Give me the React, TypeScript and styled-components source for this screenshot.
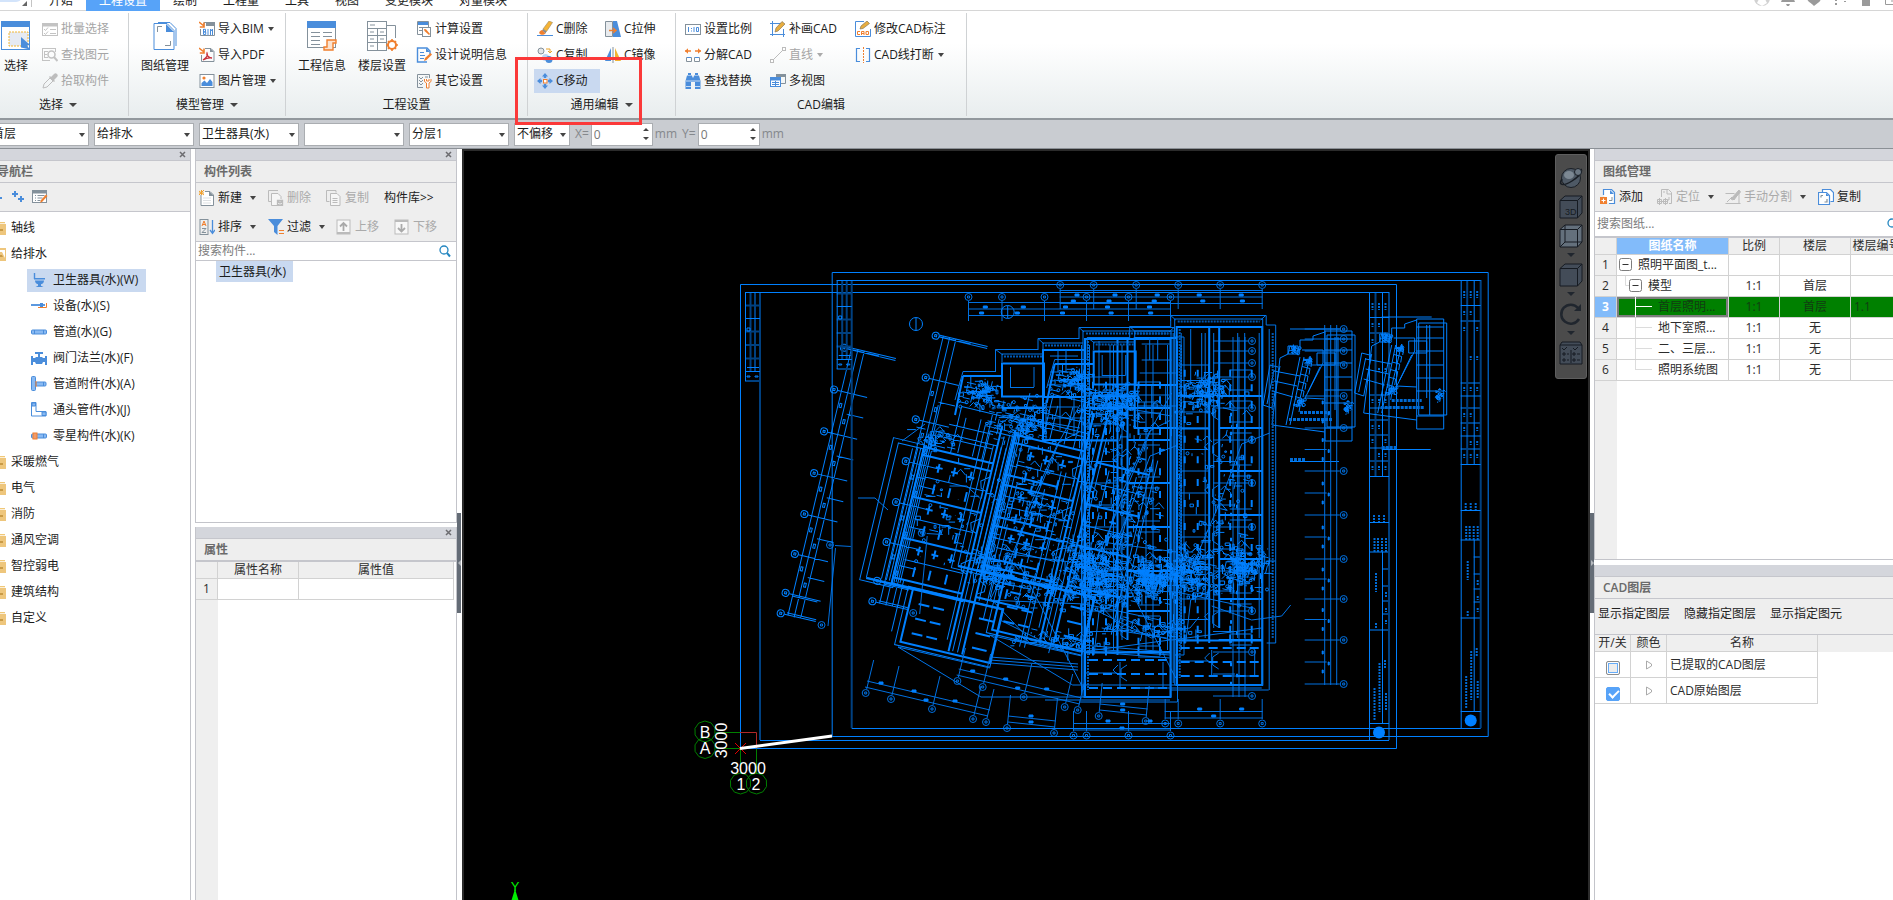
import React from 'react';
import styled, { createGlobalStyle, css } from 'styled-components';

const BLUE = '#4a8ddb';
const GREY = '#84919b';
const ORANGE = '#f07f2e';
const CAD = '#0080ff';
const DIM = '#0059b3';
const FAINT = '#004080';

const GlobalStyle = createGlobalStyle`
  * { box-sizing: border-box; }
  body { margin: 0; background: #fff; overflow: hidden; }
  body, button, input, select, table {
    font-family: "Open Sans", "Noto Sans CJK SC", sans-serif;
    font-size: 12px;
    line-height: 16px;
    color: #1c1c1c;
  }
  button { border: 0; padding: 0; margin: 0; background: none; white-space: nowrap; }
  ul { list-style: none; margin: 0; padding: 0; }
  svg { display: block; flex: none; }
`;

/* ------------------------------------------------------------------ icons */

type IconName = keyof typeof icons;

const icons = {
  batch: <g fill="none" stroke="#c3c3c3"><rect x=".5" y="2.5" width="15" height="12" /><path d="M0 4h16" strokeWidth="3" /><path d="M2 8l1.500 1.500L6 6.500M2 12l1.500 1.500L6 10.500M8 8.500h6M8 12.500h6" /></g>,
  find: <g fill="none" stroke="#c3c3c3"><path d="M0 1.500h14M0 13.500h8M.5 1v12M13.500 1v4M2 4.500h4M2.500 4v7M2 7.500h3M2 10.500h4" /><circle cx="9.500" cy="7.500" r="3.500" strokeWidth="1.600" /><path d="M12 10l3.500 4" strokeWidth="2" /></g>,
  pick: <g fill="#bdbdbd"><path d="M1 15l1-4 6-6 3 3-6 6z" fill="none" stroke="#bdbdbd" /><path d="M7 4l1-1 1 1 3-3a2 2 0 0 1 3 3l-3 3 1 1-1 1z" /></g>,
  bim: <g><path d="M5 4.500V1.500h10.500v13H1.500V8" fill="none" stroke={GREY} /><path d="M7 1h9v4H7z" fill={GREY} /><path d="M0 1l5 4M5 1.500V6H.8" fill="none" stroke={ORANGE} strokeWidth="1.600" /><path d="M4.500 8v5.500h2.200v-2.600H4.500h2V8.300h-2M9 8v6M11.500 14V8l1 2 1-2v6" fill="none" stroke={BLUE} /></g>,
  pdf: <g><path d="M6 1.500h6l3 3v10H2.500V8" fill="none" stroke={GREY} /><path d="M11 1v4h4z" fill={GREY} /><path d="M0 1l5 4M5 1.500V6H.8" fill="none" stroke={ORANGE} strokeWidth="1.600" /><path d="M4 13c3-2 5-5 4-7-1 2 2 5 5 5-3-.5-6 .3-9 2z" fill="none" stroke="#c8323c" strokeWidth="1.300" /></g>,
  image: <g><rect x="1" y="1.500" width="14" height="13" fill="#fff" stroke={GREY} /><circle cx="5" cy="5" r="1.600" fill={ORANGE} /><path d="M2.500 13V10l3-2.500L8 10l3-4 2.500 3v4z" fill={BLUE} /></g>,
  calc: <g><path d="M6 13.500H1.500v-13h11V6" fill="none" stroke={GREY} /><path d="M2 1h10v3H2z" fill={BLUE} /><path d="M3 6.500h3M3 9.500h3" stroke={GREY} /><rect x="6.500" y="6.500" width="8" height="9" fill="#fff" stroke={GREY} /><path d="M8 8l2 .3L14 13l-1 1-4.500-4z" fill={ORANGE} /></g>,
  design: <g><path d="M14 7V4L11 1H1.500v14H11" fill="none" stroke={BLUE} strokeWidth="1.400" /><path d="M10 1v4h4z" fill={BLUE} /><path d="M4 5.500h4M4 8.500h5M4 11.500h4" stroke={BLUE} /><path d="M8 14l1-3 5.500-5 1.500 1.500-5.500 5.500z" fill={ORANGE} /></g>,
  other: <g><path d="M7 14.500H1.500v-13h12V5" fill="none" stroke={GREY} /><path d="M3 4l2 2 2-2M3 7l2 2 2-2M3 10l2 2 2-2M9 4h3" fill="none" stroke={GREY} /><path d="M8.500 6v2.500l2 1.500v5h2.500v-5l2-1.500V6M10.500 6v2h2.500V6" fill="#fff" stroke={ORANGE} /></g>,
  erase: <g><path d="M0 14.500h16" stroke={BLUE} /><path d="M12 0l3.500 1.500-6 9L6 8z" fill="#f5b335" stroke="#9a8a66" strokeWidth=".6" /><path d="M6 8l3.500 2.500-1 2L5 9.500z" fill="#888" /><path d="M5 9l3.500 3.500c-2 2-5 1.500-6 0s1-3 2.500-3.500z" fill={ORANGE} /></g>,
  copyC: <g><circle cx="4" cy="4" r="3" fill="#e2e5e8" stroke={GREY} /><circle cx="8.500" cy="10.500" r="3.500" fill="#bcd5f3" /><path d="M9 2h4v3M11 4l2 2 2-2" fill="none" stroke="#e8a32b" /><circle cx="12" cy="12.500" r="3.500" fill={BLUE} /></g>,
  move: <g><rect x="6.500" y="6.500" width="3.500" height="3.500" fill="#fff" stroke={ORANGE} /><path d="M8 0l3 3.500H9.200V5H6.800V3.500H5zM8 16l3-3.500H9.200V11H6.800v1.500H5zM0 8l3.500-3v1.800H5v2.400H3.500V11zM16 8l-3.500-3v1.800H11v2.400h1.500V11z" fill={BLUE} /></g>,
  stretch: <g><path d="M.5.500h7v15h-7z" fill="#e8ebee" stroke={GREY} /><path d="M8 0h4l4 16H8z" fill={BLUE} /><path d="M4 9.500h6M8 7l3 2.500L8 12" fill="none" stroke={ORANGE} strokeWidth="1.400" /></g>,
  mirror: <g><path d="M6 1v13H0z" fill={BLUE} /><path d="M10 1v13h6z" fill="#f3b431" /><path d="M8 0v16" stroke={GREY} /></g>,
  scale: <g fill="none" stroke={GREY}><rect x=".5" y="3.500" width="15" height="10" /><path d="M3.500 6v5M6.500 7v1M6.500 9.500v1M9 6v5M11.500 6.500h2v4h-2z" stroke={BLUE} /></g>,
  explode: <g><path d="M0 4h6M10 4h6" stroke={ORANGE} strokeWidth="1.400" /><path d="M0 4l3-2.800v5.600zM16 4l-3-2.800v5.600z" fill={ORANGE} /><path d="M1.500 10.500h5v4h-5zM9.500 10.500h5v4h-5z" fill="#fff" stroke={GREY} /><path d="M2 10.500h4M10 10.500h4" stroke={BLUE} /></g>,
  binocular: <g fill={BLUE}><path d="M3 0h3v2H3zM10 0h3v2h-3zM2 2.500h5l.5 2h1l.5-2h5L15.500 8v8H10V9H6v7H.5V8z" /><path d="M1 8h14M1 13.500h5M10 13.500h5" stroke="#fff" strokeWidth=".7" /></g>,
  draw: <g><path d="M0 2.500h11M2.500 0v15M0 13.500h15M13.500 8v8" fill="none" stroke={BLUE} /><path d="M5 11l1-4 6-6.500L15 3 8 10z" fill="#e7ad3f" stroke="#8a7a5a" strokeWidth=".7" /></g>,
  line: <g fill="none" stroke="#bcbcbc"><path d="M2.500 13.500l11-11" /><rect x=".5" y="12.500" width="3" height="3" fill="#fff" /><rect x="12.500" y=".5" width="3" height="3" fill="#fff" /></g>,
  views: <g><path d="M6 1.500h9.500v9H11" fill="none" stroke={GREY} /><path d="M6 1h10v3H6z" fill={GREY} /><rect x=".5" y="4.500" width="10" height="9" fill="#fff" stroke={BLUE} /><path d="M0 6h11" stroke={BLUE} strokeWidth="3" /><path d="M2 9.500h7M2 11.500h7M5.500 8v6" stroke={BLUE} /></g>,
  annotate: <g><path d="M9 .5H.5v15h15V8" fill="none" stroke={BLUE} /><path d="M5 8l1-3 6-5 2.500 2.500L8 7.500z" fill="#e7ad3f" stroke="#8a7a5a" strokeWidth=".7" /><path d="M5 10.500H2.500v3H5M6.500 14v-3.500h2.500V14M6.500 12.500h2.500M11 10.500h2.500v3H11z" fill="none" stroke={ORANGE} /></g>,
  breakLine: <g fill="none"><path d="M5 1.500H1.500v13H5M11 1.500h3.500v13H11" stroke={BLUE} strokeWidth="1.200" /><path d="M8.500 0v16" stroke={ORANGE} strokeDasharray="2 1" /></g>,
  plusPair: <g stroke={BLUE} strokeWidth="2"><path d="M1 5h6M4 2v6M7 10h6M10 7v6" /></g>,
  dots: <path d="M2 9h2M9 9h3" stroke={BLUE} strokeWidth="2" />,
  listEdit: <g><rect x=".5" y="1.500" width="14" height="12" fill="#fff" stroke={GREY} /><path d="M0 3h15" stroke={GREY} strokeWidth="3" /><path d="M3 6.500h1M5.500 6.500h7M3 9h1M5.500 9h5M3 11.500h1M5.500 11.500h3" stroke={GREY} /><path d="M8 14l1-3 5-5.500 1.500 1.500-5 5.500z" fill={ORANGE} /></g>,
  folder: <g><path d="M1 2h14v1.300H1z" fill="#f0c878" /><path d="M0 4h16v11H0z" fill="#eec67c" /><path d="M6 9h7v2H6z" fill="#c99a45" /></g>,
  folderOpen: <g><path d="M0 2h16v13H0z" fill="#eec67c" /><path d="M6 4h9v8l-3-6H6z" fill="#fff" /><path d="M0 6.500h12l2.500 8.500H0z" fill="#eec67c" /><path d="M8 9h4l1 2H9z" fill="#c99a45" /></g>,
  toilet: <g fill={BLUE}><path d="M3.500 1v6" stroke={BLUE} strokeWidth="1.400" /><path d="M3 6h11v1.500H3zM4 8.500h9c0 2-1 3.200-3 3.700v1.600l2.500 1.200h-8L7 13.800v-1.600C5 11.700 4 10.500 4 8.500z" /></g>,
  device: <g><path d="M0 7h14" stroke={BLUE} strokeWidth="1.800" /><path d="M9 5h3v4H9z" fill={BLUE} /><path d="M7 9.500h8.500V5" fill="none" stroke={ORANGE} /></g>,
  pipe: <g fill="#88b9f2" stroke={BLUE}><rect x=".5" y="6" width="15" height="4" rx="1" /><path d="M3.500 6v4M12.500 6v4" /></g>,
  valve: <g fill={BLUE}><path d="M4 2h8v2H9v3h2l1 1h2V6h2v9h-2v-3h-2l-1 2H5l-1-2H2v3H0V6h2v2h2l1-1h2V4H4z" /></g>,
  fitting: <g fill="#88b9f2" stroke={BLUE}><rect x=".5" y=".5" width="4" height="14" rx="1" /><rect x="5" y="6" width="10" height="4" rx="1" /><path d="M5 5v6" stroke={ORANGE} /><path d="M12.500 6v4" /></g>,
  elbow: <g fill="#fff" stroke={BLUE}><path d="M.5.500h4.500v9H15v4.500H.5z" /><path d="M1 1h3.500v3H1zM11 10h4v3.500h-4z" fill="#88b9f2" /></g>,
  misc: <g fill="#88b9f2" stroke={BLUE}><rect x=".5" y="6" width="15" height="4" rx="1" /><rect x="2" y="5" width="4" height="6" fill="#f09a6a" stroke={ORANGE} /><path d="M12.500 6v4" /></g>,
  newDoc: <g><path d="M2 5v10.500h12.500V5L11 1.500H6" fill="#fff" stroke={GREY} /><path d="M10 1v5h5z" fill={GREY} /><path d="M4 8h8M4 10.500h8M4 13h8" stroke="#dde0e3" /><path d="M0 1l5 4M5 0L0 5M0 3h5M2.500 0v5" stroke="#f0a02e" /></g>,
  delDoc: <g fill="none" stroke="#bbb"><path d="M3 11.500H.5V.5H10" /><path d="M9 15.500H3.500v-12H10l3 3V9" fill="#f6f6f6" /><path d="M9.500 10.500h5v5h-5zM9.500 10.500l5 5M14.500 10.500l-5 5" strokeWidth="1.300" /></g>,
  copyDoc: <g fill="none" stroke="#bbb"><path d="M3.500 11.500H.5V.5H10v2" /><path d="M4.500 3.500H11l3 3v9H4.500z" fill="#f6f6f6" /><path d="M6.500 8.500h5M6.500 10.500h5M6.500 12.500h5" /></g>,
  sort: <g fill="none"><rect x="1" y=".5" width="8" height="15" stroke={GREY} /><path d="M3 7l2-5 2 5M3.500 5.500h3" stroke={ORANGE} /><path d="M3 9.500h4l-4 4h4" stroke={GREY} /><path d="M13.500 1v13M11 11l2.500 3.500L16 11" stroke={BLUE} strokeWidth="1.300" /></g>,
  filter: <g><path d="M0 0h15L9.500 7v9L6 13V7z" fill={BLUE} /><path d="M11 11.500h5M11 14.500h5" stroke={ORANGE} /></g>,
  up: <g><rect x="1" y="1" width="13" height="14" fill="#f8f8f8" stroke="#bbb" /><path d="M1 14h13" stroke="#bbb" strokeWidth="2" /><path d="M7.500 12V5M4 7.500L7.500 4 11 7.500" fill="none" stroke="#aaa" strokeWidth="1.800" /></g>,
  down: <g><rect x="1" y="1" width="13" height="14" fill="#f8f8f8" stroke="#bbb" /><path d="M1 2h13" stroke="#bbb" strokeWidth="2" /><path d="M7.500 5v7M4 9l3.500 3.500L11 9" fill="none" stroke="#aaa" strokeWidth="1.800" /></g>,
  search: <g fill="none" stroke="#2386c0" strokeWidth="1.300"><circle cx="7" cy="7" r="4" /><path d="M10 10l3 3.500" strokeWidth="2" /></g>,
  add: <g><path d="M3.500 6V.5h8l3 3v11H9" fill="#fff" stroke={BLUE} strokeWidth="1.200" /><path d="M10 1v4h4z" fill={BLUE} /><path d="M9 11.500h3V8" fill="none" stroke={GREY} /><path d="M0 8h7v7H0z" fill={ORANGE} /><path d="M1.500 11.500h4M3.500 9.500v4" stroke="#fff" /></g>,
  locate: <g fill="none" stroke="#bbb"><path d="M4.500 8V.5h7l3 3v11H12" /><path d="M10 1v4h4M6 3h2M12 8v3h-2" /><path d="M.5 10.500h4v4h-4zM6.500 10.500h4v4h-4zM2.500 9v7M8.500 9v7M0 12.500h11" /></g>,
  split: <g fill="none" stroke="#bbb"><path d="M.5 4.500h9M.5 14.500h15M2 13l5-5 2 3 5-7v10" /><path d="M6 10L14 1l1.500 2L8 11z" fill="#bbb" /></g>,
  copySheet: <g fill="#fff" stroke={BLUE} strokeWidth="1.200"><path d="M4.500 3V.5h8l3 3v9h-3" /><path d="M.5 3.500h8l3 3v9H.5z" /><path d="M8 4v3h3z" fill={BLUE} stroke="none" /><path d="M3 6.500v2M3 6.500h2M9 10v3H6.500" fill="none" stroke={GREY} /></g>,
};

const Icon = ({ name, size = 16 }: { name: IconName; size?: number }) => (
  <svg width={size} height={size} viewBox="0 0 16 16" aria-hidden="true">{icons[name]}</svg>
);

const SelectBig = () => (
  <svg width="30" height="30" viewBox="0 0 30 30" aria-hidden="true">
    <rect x=".5" y=".5" width="28" height="28" fill="#fff" stroke={BLUE} />
    <path d="M0 0h29v6H0z" fill={BLUE} />
    <path d="M8 11h19v14H8z" fill="#e6eaf2" stroke="#f2b632" strokeDasharray="2 1" />
    <path d="M20 16l9 8-3 .5 3 4-9-2z" fill={BLUE} />
  </svg>
);

const SheetBig = () => (
  <svg width="30" height="30" viewBox="0 0 30 30" fill="none" aria-hidden="true">
    <path d="M8 1.500h12l6 6V25" stroke={BLUE} />
    <path d="M4 2.500h13l7 7v19H4z" fill="#fff" stroke={BLUE} />
    <path d="M16 3l8 8h-8z" fill={BLUE} />
    <path d="M7.500 11V5.500H12M20.500 20v4.500H15" stroke={GREY} />
  </svg>
);

const InfoBig = () => (
  <svg width="30" height="30" viewBox="0 0 30 30" fill="none" aria-hidden="true">
    <rect x=".5" y=".5" width="28" height="26" fill="#fff" stroke={GREY} />
    <path d="M0 0h29v7H0z" fill={BLUE} />
    <path d="M4 11.500h9M4 15.500h9M4 19.500h9M4 23.500h9M16 11.500h9M16 15.500h9" stroke={GREY} />
    <path d="M20 19h9v3h-3v7h-9v-3h3z" fill="#fbe3d0" stroke={ORANGE} strokeWidth="1.400" />
  </svg>
);

const FloorBig = () => (
  <svg width="32" height="30" viewBox="0 0 32 30" fill="none" stroke={GREY} aria-hidden="true">
    <rect x="1.500" y=".5" width="19" height="29" fill="#fff" />
    <path d="M20.500 4.500h9V17M1.500 7.500h19M1.500 14.500h19M1.500 21.500h19M11.500 7v22M4 4h5M4 11h4M14 11h4M4 18h4M14 18h4M4 25h4" />
    <circle cx="26" cy="24" r="4" stroke={ORANGE} strokeWidth="2" fill="#fff" />
    <path d="M26 18v2M26 28v2M20 24h2M30 24h2M22 20l1 1M29 27l1 1M22 28l1-1M29 21l1-1" stroke={ORANGE} strokeWidth="1.600" />
  </svg>
);

const Caret = ({ color = '#444', wide = false }: { color?: string; wide?: boolean }) => (
  <svg width={wide ? 8 : 6} height="4" viewBox="0 0 8 4" preserveAspectRatio="none" aria-hidden="true">
    <path d="M0 0h8L4 4z" fill={color} />
  </svg>
);

const Cross = () => (
  <svg width="7" height="7" viewBox="0 0 7 7" stroke="#6c6c70" strokeWidth="1.500" aria-hidden="true">
    <path d="M1 1l5 5M6 1L1 6" />
  </svg>
);

/* ------------------------------------------------------------ page chrome */

const Shell = styled.div`
  display: flex;
  flex-direction: column;
  height: calc(100vh + 13px);
  margin: -12px -12px 0;
`;

const TabBar = styled.header`
  display: flex;
  flex: none;
  height: 23px;
  border-bottom: 1px solid #d6d6d6;
  background: #fff;
`;

const AppMenu = styled.button`
  display: flex;
  align-items: flex-end;
  justify-content: flex-end;
  width: 44px;
  height: 19px;
  margin-right: 4px;
  padding: 0 4px 1px 0;
  border-right: 1px solid #c4c4c4;
`;

const AppBadge = styled.span`
  flex: 1;
  align-self: flex-start;
  height: 14px;
  border-radius: 0 0 6px 0;
  background: #d3e4fb;
`;

const Tab = styled.button<{ $active?: boolean }>`
  height: 23px;
  padding: 3px 13px 0;
  ${p => p.$active && css`
    background: #57a3f8;
    color: #fff;
  `}
`;

const TabTools = styled.div`
  display: flex;
  align-items: flex-end;
  gap: 10px;
  margin-left: auto;
  padding: 0 5px 4px 0;
`;

const RibbonBar = styled.section`
  display: flex;
  flex: none;
  height: 109px;
  border-bottom: 2px solid #92989d;
  background: linear-gradient(#fff 30%, #e8edee);
`;

const RibbonGroup = styled.div<{ $width: number; $pad?: number }>`
  display: flex;
  flex-direction: column;
  flex: none;
  width: ${p => p.$width}px;
  margin: 2px 0;
  padding: 3px 0 0 ${p => p.$pad ?? 12}px;
  border-right: 1px solid #cfd2d4;
`;

const GroupBody = styled.div`
  display: flex;
  gap: 7px;
  height: 78px;
`;

const GroupTitle = styled.button<{ $pad?: number }>`
  display: flex;
  align-items: center;
  justify-content: center;
  gap: 6px;
  height: 24px;
  margin-left: -${p => p.$pad ?? 12}px;
`;

const BigPair = styled.div`
  display: flex;
  gap: 12px;
`;

const BigButton = styled.button`
  display: flex;
  flex-direction: column;
  align-items: center;
  gap: 7px;
  min-width: 32px;
  padding-top: 5px;
`;

const ToolGrid = styled.div<{ $cols?: string }>`
  display: grid;
  grid-template-columns: ${p => p.$cols ?? 'auto'};
  grid-template-rows: repeat(3, 26px);
  grid-auto-flow: column;
  align-items: center;
  justify-items: start;
`;

const SmallButton = styled.button<{ $selected?: boolean; $muted?: boolean }>`
  display: flex;
  align-items: center;
  gap: 3px;
  height: 24px;
  padding: 0 3px;
  color: ${p => (p.$muted ? '#a5a5a5' : 'inherit')};
  ${p => p.$selected && css`
    padding-right: 12px;
    background: #c9d9f0;
  `}
  & > svg:nth-of-type(2) { margin-left: 1px; }
`;

const Highlight = styled.div`
  position: absolute;
  left: -19px;
  top: -12px;
  width: 127px;
  height: 68px;
  border: 3px solid #fb3939;
  pointer-events: none;
`;

const MarkedArea = styled.div`
  position: relative;
  grid-row: 3;
  z-index: 1;
`;

const OptionBar = styled.section`
  display: flex;
  align-items: center;
  flex: none;
  gap: 5px;
  height: 29px;
  padding-left: 1px;
  border-bottom: 1px solid #8b9096;
  background: #c9ccd1;
`;

const SelectBox = styled.span<{ $width: number }>`
  position: relative;
  display: block;
  width: ${p => p.$width}px;
  & > svg { position: absolute; right: 4px; top: 10px; pointer-events: none; }
`;

const Select = styled.select`
  appearance: none;
  display: block;
  width: 100%;
  height: 23px;
  padding: 0 2px;
  border: 1px solid #aaadb1;
  border-radius: 0;
  background: #fff;
`;

const OffsetLabel = styled.label`
  display: flex;
  align-items: center;
  gap: 2px;
  color: #85888c;
`;

const Spin = styled.span`
  display: flex;
  align-items: center;
  width: 62px;
  height: 23px;
  padding-right: 3px;
  border: 1px solid #aaadb1;
  background: #fff;
`;

const SpinInput = styled.input`
  flex: 1;
  min-width: 0;
  height: 20px;
  padding: 0 2px;
  border: 0;
  background: none;
  color: #777;
`;

const Workspace = styled.main`
  display: flex;
  flex: 1;
  min-height: 0;
`;

const Column = styled.div<{ $width: number; $gap?: number; $after?: number }>`
  display: flex;
  flex-direction: column;
  flex: none;
  gap: ${p => p.$gap ?? 0}px;
  width: ${p => p.$width}px;
  min-height: 0;
  margin-right: ${p => p.$after ?? 0}px;
`;

const Panel = styled.section<{ $height?: string }>`
  display: flex;
  flex-direction: column;
  flex: ${p => (p.$height ? `0 0 ${p.$height}` : '1')};
  min-height: 0;
  overflow: hidden;
  border: 1px solid #c3c4ca;
  border-top: 0;
  background: #fff;
`;

const PanelStrip = styled.div`
  display: flex;
  align-items: center;
  justify-content: flex-end;
  flex: none;
  height: 12px;
  padding-right: 4px;
  border-bottom: 1px solid #c5c6cc;
  background: #d4d6dc;
`;

const PanelTitle = styled.h2`
  flex: none;
  height: 22px;
  margin: 0;
  padding: 2px 8px 0;
  border-bottom: 1px solid #c5c6cc;
  background: #eee;
  color: #6a6a6a;
  font-size: 12px;
  font-weight: 600;
  line-height: 18px;
`;

const ToolRow = styled.div<{ $height: number; $line?: boolean; $gap?: number; $pad?: number; $below?: number }>`
  display: flex;
  align-items: center;
  flex: none;
  gap: ${p => p.$gap ?? 0}px;
  height: ${p => p.$height}px;
  padding: 0 0 ${p => p.$below ?? 0}px ${p => p.$pad ?? 0}px;
  border-bottom: ${p => (p.$line ? '1px solid #c5c6cc' : '0')};
  background: #eee;
`;

const PanelButton = styled.button<{ $width?: number; $muted?: boolean }>`
  display: flex;
  align-items: center;
  flex: none;
  gap: 3px;
  width: ${p => (p.$width ? `${p.$width}px` : 'auto')};
  color: ${p => (p.$muted ? '#aaa' : '#222')};
  & > svg:nth-of-type(2) { margin-left: 5px; }
`;

const SearchRow = styled.label<{ $height: number }>`
  display: flex;
  align-items: center;
  flex: none;
  height: ${p => p.$height}px;
  padding: 0 3px 0 2px;
  border-bottom: 1px solid #c5c6cc;
`;

const SearchInput = styled.input`
  flex: 1;
  min-width: 0;
  height: 16px;
  padding: 0;
  border: 0;
  outline: 0;
  &::placeholder { color: #7c7c7c; opacity: 1; }
`;

const Tree = styled.ul`
  padding-top: 3px;
`;

const TreeItem = styled.li<{ $child?: boolean }>`
  display: flex;
  align-items: center;
  height: 26px;
  padding-left: ${p => (p.$child ? 38 : 1)}px;
`;

const TreeButton = styled.button<{ $child?: boolean; $selected?: boolean }>`
  display: flex;
  align-items: center;
  gap: ${p => (p.$child ? 6 : 5)}px;
  height: 23px;
  padding: ${p => (p.$child ? '0 8px 0 4px' : '0')};
  background: ${p => (p.$selected ? '#c9d9f0' : 'none')};
`;

const ListItem = styled.button`
  height: 21px;
  margin-left: 20px;
  padding: 0 7px 0 3px;
  background: #c9d9f0;
`;

const TableArea = styled.div<{ $gutter?: boolean }>`
  flex: 1;
  min-height: 0;
  border-top: 1px solid #c5c6cc;
  background: ${p => (p.$gutter ? 'linear-gradient(#efefef, #efefef) no-repeat 0 0 / 22px 100%' : 'linear-gradient(#efefef, #efefef) no-repeat 0 0 / 100% 17px')};
`;

const Table = styled.table<{ $row: number }>`
  table-layout: fixed;
  width: 0;
  border-collapse: separate;
  border-spacing: 0;
  th, td {
    height: ${p => p.$row}px;
    padding: 0;
    border-right: 1px solid #d2d2d2;
    border-bottom: 1px solid #d2d2d2;
    background: #fff;
    color: #2c2c2c;
    font-weight: 400;
    text-align: center;
    white-space: nowrap;
    overflow: hidden;
  }
  thead th { height: 17px; background: #efefef; }
  tbody th { background: #efefef; }
`;

const HeadActive = styled.th`
  && { background: #82bbfa; color: #fff; font-weight: 700; }
`;

const SheetRow = styled.tr<{ $current?: boolean }>`
  ${p => p.$current && css`
    && td { background: #008000; color: #123c12; }
    && th { background: #82bbfa; color: #fff; font-weight: 700; }
    && td:nth-child(2) { box-shadow: inset 0 0 0 2px #7d7d7d; }
    && td:last-child { text-align: left; padding-left: 3px; }
  `}
`;

const NameCell = styled.span`
  display: flex;
  align-items: center;
  height: 20px;
`;

const LayerName = styled.td`
  && { padding-left: 3px; text-align: left; }
`;

const CheckBox = styled.input`
  appearance: none;
  display: grid;
  width: 14px;
  height: 14px;
  margin: 6px auto 0;
  border: 1px solid #8c8c8c;
  border-radius: 2px;
  background: #eee;
  box-shadow: inset 0 0 0 1px #fff, inset 0 0 0 2px #66acf8;
  &:checked { border-color: #57a3f8; background: #57a3f8; box-shadow: none; }
  &:checked::after {
    content: '';
    width: 8px;
    height: 4px;
    margin: 2px 0 0 2px;
    border: solid #fff;
    border-width: 0 0 2px 2px;
    rotate: -45deg;
  }
`;

const ColorMark = styled.svg`
  margin: 0 auto;
`;

const Splitter = styled.div<{ $width: number }>`
  display: flex;
  flex: none;
  width: ${p => p.$width}px;
  padding-top: 364px;
`;

const SplitHandle = styled.button`
  display: flex;
  align-items: center;
  justify-content: center;
  width: 4px;
  height: 100px;
  background: #646c76;
`;

const Viewport = styled.section`
  position: relative;
  flex: 1;
  min-width: 0;
  border: solid #2b2b2b;
  border-width: 2px 2px 0;
  background: #000;
  overflow: hidden;
`;

const ViewTools = styled.div`
  position: absolute;
  top: 3px;
  right: 1px;
  display: flex;
  flex-direction: column;
  align-items: center;
  width: 32px;
  height: 225px;
  padding-top: 8px;
  border: 1px solid #5e5e5e;
  border-radius: 3px;
  background: #4b4b4b;
`;

const ViewTool = styled.button<{ $menu?: boolean }>`
  display: flex;
  flex-direction: column;
  align-items: center;
  justify-content: center;
  gap: 5px;
  height: ${p => (p.$menu ? 39 : 29)}px;
`;

/* ---------------------------------------------------------- CAD drawing */

type Pt = [number, number];
const n1 = (v: number) => Math.round(v * 10) / 10;
const seg = (x1: number, y1: number, x2: number, y2: number) => `M${n1(x1)} ${n1(y1)}L${n1(x2)} ${n1(y2)}`;
const poly = (...pts: Pt[]) => 'M' + pts.map(p => `${n1(p[0])} ${n1(p[1])}`).join('L');
const box = (x: number, y: number, w: number, h: number) => `M${n1(x)} ${n1(y)}h${n1(w)}v${n1(h)}h${n1(-w)}z`;
const ring = (x: number, y: number, r: number) => `M${n1(x - r)} ${n1(y)}a${r} ${r} 0 1 0 ${2 * r} 0a${r} ${r} 0 1 0 ${-2 * r} 0`;

const random = (seed: number) => {
  let s = seed;
  return () => {
    s = (s * 1664525 + 1013904223) % 4294967296;
    return s / 4294967296;
  };
};

const bubble = (x: number, y: number) => ring(x, y, 3.5) + box(x - 1, y - 1, 2, 2);

/* Frame, title block and revision strip */
const frameDim =
  seg(760, 292, 760, 740) + seg(1389, 292, 1389, 740) + seg(1375.5, 292, 1375.5, 476) +
  [305.5, 331.5, 345, 358.5, 381].map(y => seg(745, y, 760, y)).join('') + seg(750.5, 292, 750.5, 372) + seg(755, 292, 755, 372) +
  [333, 395, 420, 435, 461, 552, 630].map(y => seg(1369, y, 1389, y)).join('') +
  [569, 586, 601, 614].map(y => seg(1382, y, 1389, y)).join('');
const frameThin =
  box(740.5, 284.5, 656, 464) + seg(745, 292.5, 1389, 292.5) + seg(760, 740.5, 1389, 740.5) +
  seg(745.5, 292, 745.5, 381) + seg(1369.5, 292, 1369.5, 740) + seg(1382.5, 292, 1382.5, 476) + seg(1382.5, 552, 1382.5, 723) +
  [318.5, 371.5].map(y => seg(745, y, 760, y)).join('') +
  [317.5, 408, 448, 476.5, 522.5, 723.5].map(y => seg(1369, y, 1389, y)).join('');

const titleMarks = (() => {
  let d = '';
  [305, 325, 341, 370, 401, 427, 441, 455, 468].forEach((y, i) => {
    [1372.5, 1379, 1385.5].forEach((x, k) => {
      if ((i + k) % 4 !== 3) d += seg(x, y - 2, x, y + 2 + (i === 0 ? 3 : 0));
    });
  });
  [1374, 1379, 1384].forEach(x => { d += seg(x, 515, x, 522); });
  [1374.5, 1378, 1382, 1386].forEach(x => { d += seg(x, 538, x, 552); });
  d += seg(1376, 573, 1376, 592) + seg(1376, 623, 1376, 628) + seg(1379.5, 663, 1379.5, 712) + seg(1374.5, 688, 1374.5, 720) + seg(1385, 660, 1385, 668) + seg(1386, 693, 1386, 711) + seg(1386, 592, 1386, 597) + seg(1386, 608, 1386, 612) + seg(1386, 620, 1386, 624);
  return d;
})();

/* Axis grids */
const axisX = [968.5, 1002, 1044.5, 1086.5, 1128.5, 1170.5];
const axisY = [341, 351, 363, 377, 408, 440, 483, 527, 571, 611, 652, 696];
const tilt: Pt[] = [0, 43, 86, 129, 171, 212, 252, 273].map(v => [0, v]);

const axes = (() => {
  let d = '';
  axisX.forEach(x => { d += bubble(x, 297) + seg(x, 301, x, 321); });
  [302.5, 309, 315.5].forEach(y => { d += seg(968, y, 1171, y); });
  [1073.5, 1086.5, 1128.5, 1170.5].forEach(x => { d += bubble(x, 735.5) + seg(x, 711, x, 731); });
  [723.5, 730].forEach(y => { d += seg(1073, y, 1171, y); });
  axisY.forEach((y, i) => {
    d += bubble(1252, y) + seg(1213, y, 1248, y);
    if (i > 4 && i < 11) d += seg(1213, (y + axisY[i + 1]) / 2, 1235, (y + axisY[i + 1]) / 2);
  });
  [1233, 1239, 1245].forEach(x => { d += seg(x, 337, x, 697); });
  const lower: Pt[] = [[865.7, 693], [891, 699], [932, 709], [973, 719], [986, 722]];
  lower.forEach(([x, y]) => { d += bubble(x, y) + seg(x + 1, y - 4, x + 8, y - 33); });
  d += seg(867, 681, 990, 710) + seg(865, 687, 988, 716);
  d += bubble(1007, 728) + bubble(1054, 733) + seg(1007.500, 724, 1010.500, 695) + seg(1054.500, 729, 1057.500, 698) + seg(1008, 716, 1056, 721) + seg(1008, 722, 1055, 727);
  d += bubble(830, 545) + bubble(821.5, 625) + seg(835, 545.5, 851, 546.5) + seg(835.500, 548, 828, 626);
  return d;
})();

const dims = (() => {
  const r = random(8);
  let d = '';
  for (let i = 0; i < axisX.length - 1; i++) {
    const m = (axisX[i] + axisX[i + 1]) / 2;
    d += box(m - 2, 306, 4, 2) + box(m - 8 + r() * 10, 312, 4, 2);
  }
  for (let i = 4; i < axisY.length - 1; i++) {
    const m = (axisY[i] + axisY[i + 1]) / 2;
    d += box(1230.500, m - 11, 1, 3) + box(1230.500, m + 8, 1, 3) + box(1236.5, m, 1, 3);
  }
  d += box(1106, 720, 4, 2) + box(1148, 720, 4, 2) + box(1120, 727, 4, 2) + box(879, 682, 4, 2) + box(912, 690, 4, 2) + box(924, 699, 4, 2) + box(953, 700, 4, 2) + box(1029, 715, 4, 2) + box(1029, 721, 4, 2);
  return d;
})();

/* Straight wings, with the staircase of smaller blocks beside them */
const wingThick =
  box(1085, 339, 85.5, 358) + seg(1117.500, 339, 1117.500, 655) + seg(1127.500, 339, 1127.500, 640) +
  axisY.slice(4, 11).map(y => seg(1127, y, 1170, y)).join('') + seg(1085, 652.500, 1170, 652.500) + seg(1085, 408, 1118, 408) + seg(1085, 440.500, 1118, 440.500) +
  box(1043, 350, 42, 90) + box(1002, 363.5, 42, 33) + seg(1044, 397, 1085, 397) + seg(963, 376, 1002, 376) + seg(963, 376, 955, 415) + seg(1002, 408, 1045, 408);
const wing = (() => {
  let d = poly([1079, 339], [1079, 327.5], [1174.5, 327.5], [1174.5, 337], [1184, 337], [1184, 655], [1175, 655]) + box(1083, 331, 88, 366) + seg(1177.5, 341, 1177.5, 702) + seg(1079, 702, 1177, 702);
  d += seg(1081.500, 345, 1081.500, 695) + seg(1089.500, 345, 1089.500, 655) + seg(1167.500, 345, 1167.500, 650) + seg(1113.500, 345, 1113.500, 650) + seg(1146, 345, 1146, 650) + seg(1153, 345, 1153, 650);
  d += poly([1038, 350], [1038, 338.5], [1079, 338.5]) + poly([1043, 350], [1043, 343], [1083, 343]) + poly([995.5, 372], [995.5, 349.5], [1038, 349.5]) + poly([1002, 362], [1002, 354], [1043, 354]) + poly([955, 400], [963, 371.500], [995, 371.500]);
  d += seg(1079, 327.5, 1084, 332) + seg(1174, 327.5, 1169, 332) + seg(1038, 338.5, 1044, 344) + seg(995.5, 349.5, 1003, 355);
  axisY.slice(3, 11).forEach((y, i, a) => {
    d += seg(1085, y, 1118, y);
    const next = a[i + 1] ?? 694;
    const m = (y + next) / 2;
    d += seg(1085, m, 1117, m);
    d += seg(1138, y + 5, 1160, y + 5) + seg(1138, next - 6, 1160, next - 6);
    d += poly([1127, m - 8], [1121, m - 4], [1121, m + 4], [1127, m + 8]) + poly([1118, m - 8], [1113, m - 3], [1118, m + 2]);
  });
  d += seg(1120, 662, 1120, 688) + seg(1163, 662, 1163, 688) + seg(1122, 345, 1122, 640) + seg(1099, 341, 1099, 397) + seg(1110, 345, 1110, 395);
  d += seg(1010.500, 367, 1010.500, 387) + seg(1034, 367, 1034, 387) + seg(1010, 387.500, 1034, 387.500) + seg(1050, 356, 1078, 356) + seg(1058, 350, 1058, 372) + seg(1066, 350, 1066, 372) + seg(1050, 372, 1080, 372) + seg(1048, 385, 1084, 385);
  d += seg(1002, 415, 1080, 428) + seg(1010, 407, 1078, 407) + seg(1046, 400, 1046, 440) + seg(1060, 398, 1060, 430) + seg(1074, 398, 1074, 436) + seg(1046, 418, 1084, 418);
  return d;
})();
const parapet = seg(1086, 333.500, 1168, 333.500) + seg(1181, 345, 1181, 650) + seg(1045, 345.500, 1080, 345.500) + seg(1004, 356.500, 1042, 356.500) + seg(1088, 341, 1088, 690);

/* Lamp rows in the straight wings */
const lamps = (() => {
  let d = '';
  axisY.slice(3, 11).forEach((y, i, a) => {
    const next = a[i + 1] ?? 650;
    const q = (next - y) / 4;
    [1093, 1106, 1138.500, 1160].forEach(x => { d += seg(x, y + q - 3, x, y + q + 4) + seg(x, y + 3 * q - 4, x, y + 3 * q + 3); });
  });
  [660, 674, 688].forEach(y => {
    [1089, 1103, 1117, 1131, 1145, 1158].forEach(x => { d += seg(x, y, x + 9, y); });
  });
  return d;
})();

/* Tilted wing, in coordinates along its own axis */
const tiltAxis = (() => {
  let d = '';
  tilt.forEach(([u, v], i) => { d += bubble(u, v) + seg(u + 4, v, i === 0 || i > 5 ? 36 : 34, v); });
  d += seg(4, -1.5, 53, -1.5) + seg(4, .5, 53, .5) + seg(6, 271, 36, 271) + seg(8, 253.500, 33, 253.500);
  [7.5, 14, 20.5].forEach(u => { d += seg(u, -2, u, 274); });
  [64, 107, 150, 192, 232].forEach(v => { d += seg(18, v, 35, v) + box(9, v - 9, 2, 4) + box(16, v + 6, 2, 4); });
  return d;
})();
const tiltThick =
  box(101, 78, 71, 140) + [86, 129, 171, 212].map(v => seg(101, v, 172, v)).join('') +
  box(123, 218, 92, 55) + seg(172, 40, 172, 271) + seg(186, 40, 186, 271) + seg(75, 219, 175, 219) + seg(186, 86, 240, 86) + seg(186, 129, 240, 129) + seg(186, 171, 240, 171) + seg(186, 212, 240, 212) + seg(123, 230, 123, 262);
const tiltWing = (() => {
  let d = box(69, 76, 34, 146) + box(75, 80, 26, 138) + seg(90, 82, 90, 216) + seg(95, 80, 95, 216) + seg(98, 80, 98, 216) + seg(105, 34, 105, 216) + seg(109, 80, 109, 216);
  d += box(118, 217, 98, 60) + seg(176, 60, 176, 270) + seg(181, 60, 181, 270) + seg(240, 70, 240, 250) + seg(245, 70, 245, 250) + seg(168, 60, 168, 260) + seg(190, 60, 190, 215);
  [86, 129, 171].forEach(v => {
    d += seg(108, v + 21, 168, v + 21) + seg(190, v + 21, 238, v + 21) + seg(200, v + 5, 200, v + 38) + seg(228, v + 5, 228, v + 38);
    d += poly([172, v + 6], [164, v + 12], [166, v + 19], [172, v + 21]) + poly([186, v + 24], [193, v + 28], [193, v + 34], [186, v + 38]);
  });
  d += seg(135, 40, 135, 76) + seg(150, 38, 150, 76) + seg(120, 50, 165, 50) + seg(118, 64, 168, 64) + seg(128, 30, 200, 30) + seg(128, 30, 128, 78) + seg(160, 30, 160, 78) + seg(112, 212, 112, 265) + seg(108, 60, 172, 60);
  return d;
})();
const tiltLamps = (() => {
  let d = '';
  [86, 129, 171].forEach(v => {
    [120, 136, 153, 215].forEach((u, i) => { d += seg(u, v + 5, u, v + 14) + seg(u, v + 26, u, v + 36) + seg(u - 3, v + 9 + i, u + 4, v + 9 + i); });
  });
  [232, 247, 262].forEach(v => { d += seg(132, v, 143, v) + seg(147, v, 158, v) + seg(194, v, 209, v); });
  return d;
})();

/* Cables and fixtures; runs follow the square or the tilted grid */
const cluster = (seed: number, cx: number, cy: number, rx: number, ry: number, count: number, reach = 1) => {
  const r = random(seed);
  let d = '';
  for (let i = 0; i < count; i++) {
    const x = cx + (r() + r() - 1) * rx;
    const y = cy + (r() + r() - 1) * ry;
    const kind = r();
    const slope = r() < 0.5 ? 0 : 0.23;
    const len = (r() - 0.5) * 20 * reach;
    if (kind < 0.3) d += seg(x, y, x + len, y + len * slope);
    else if (kind < 0.6) d += seg(x, y, x - len * slope, y + len);
    else if (kind < 0.78) d += box(x, y, (1 + r() * 4) * reach, (1 + r() * 3) * reach);
    else if (kind < 0.92) d += ring(x, y, 1.5);
    else d += poly([x, y], [x + 4 * reach, y - 4 * reach], [x + 9 * reach, y + 2 * reach]);
  }
  return d;
};
const wiring =
  cluster(3, 982, 393, 24, 16, 110) + cluster(5, 1112, 405, 32, 24, 130) + cluster(7, 1153, 580, 26, 26, 190) +
  cluster(11, 992, 570, 26, 24, 120) + cluster(13, 1070, 590, 70, 24, 200) + cluster(17, 1100, 580, 22, 28, 110) +
  cluster(19, 1020, 420, 44, 28, 90) + cluster(23, 935, 440, 22, 14, 45) + cluster(29, 1035, 500, 56, 90, 100) +
  cluster(31, 1060, 640, 56, 12, 70) + cluster(37, 1125, 500, 40, 130, 110) + cluster(41, 950, 520, 46, 66, 60);
const cables =
  poly([1080, 405], [1060, 440], [1010, 560], [990, 600]) + poly([1079, 432], [1058, 443], [1028, 510], [1005, 585]) + poly([1178, 445], [1150, 456], [1130, 510], [1100, 580]) +
  poly([990, 598], [1030, 640], [1080, 652], [1170, 640]) + poly([990, 660], [1078, 667]) + poly([990, 663], [1078, 670]) + poly([990, 657], [1078, 664]) +
  poly([898, 647], [981, 697], [1084, 697]) + poly([898, 647], [990, 668]) + poly([985, 600], [1085, 604], [1160, 620]) + poly([1000, 620], [1060, 650], [1085, 640]) +
  poly([1120, 618], [1160, 632], [1190, 628], [1199, 617]) + poly([1010, 640], [1075, 650]) + poly([1094, 655], [1099, 612], [1125, 600]) + poly([858, 498], [875, 498], [888, 510]) + poly([902, 441], [925, 424]) +
  poly([1018, 562], [1048, 620], [1084, 690]) + poly([1010, 554], [1085, 564]) + seg(1045, 700, 1170, 700);

/* Key plan at the sheet's edge */
const keyPlan = (() => {
  let d = box(1325, 331, 27, 110) + seg(1335, 337, 1335, 410) + seg(1338, 337, 1338, 427) + box(1327, 335, 28, 92) + seg(1325, 428, 1352, 428);
  [339, 350, 363, 377, 390, 403].forEach(y => { d += seg(1325, y, 1352, y); });
  d += poly([1325, 332], [1313, 336], [1313, 340], [1300, 340], [1300, 350], [1290, 346], [1288, 354], [1280, 358], [1272, 425], [1325, 432]);
  d += poly([1278, 367], [1270, 365], [1263, 405], [1272, 408], [1280, 366]) + seg(1274, 370, 1267, 404) + seg(1274, 371, 1300, 376) + seg(1274, 381, 1297, 386) + seg(1272, 391, 1293, 397) + seg(1300, 357, 1286, 425) + seg(1304, 357, 1290, 425);
  d += box(1288, 346, 10, 8) + poly([1302, 350], [1323, 350], [1323, 363], [1305, 398], [1325, 399]) + seg(1320, 367, 1308, 392) + box(1317, 353, 18, 12);
  for (let i = 0; i < 7; i++) d += poly([1304 - i * 1.8, 359 + i * 7.500], [1312 - i * 2, 361 + i * 7.500], [1311 - i * 2, 367 + i * 7.500]);
  d += poly([1310, 356], [1298, 407], [1293, 405]);
  d += seg(1290, 329, 1340, 329) + seg(1290, 461.500, 1339, 461.500);
  return d;
})();
const keyCores = cluster(43, 1347, 408, 6, 8, 34, 0.3) + cluster(47, 1295, 350, 6, 5, 34, 0.3) + cluster(53, 1308, 361, 5, 5, 26, 0.3) + cluster(59, 1300, 403, 5, 5, 26, 0.3);
const keyNotes = seg(1300, 412.500, 1330, 412.500) + seg(1289, 419.500, 1333, 419.500) + seg(1290, 459.500, 1306, 459.500);

const Plan = () => (
  <g fill="none" stroke={CAD} strokeWidth="1">
    <path d={frameDim} stroke={FAINT} strokeWidth="2" />
    <path d={frameThin} />
    <path d={titleMarks} strokeWidth="2" strokeDasharray="2 1" stroke="#006ad4" />
    <circle cx="1379" cy="732.500" r="6" fill={CAD} stroke="none" />
    <path d={box(747, 376, 3, 1) + box(755, 376, 3, 1) + box(747, 328, 3, 3) + seg(747, 367.500, 759, 367.500)} />
    <path d={axes} stroke="#0070e0" />
    <path d={dims} fill={CAD} />
    <path d={ring(916, 324, 6.5) + seg(916, 318, 916, 330)} />
    <path d={wingThick} strokeWidth="2" />
    <path d={wing} stroke="#0074e8" />
    <path d={lamps} strokeWidth="2" />
    <path d={parapet} strokeDasharray="2 1" strokeWidth="2" stroke={DIM} />
    <g transform="translate(844 347.700) rotate(13.400)">
      <path d={tiltAxis} />
      <path d={tiltThick} strokeWidth="2" />
      <path d={tiltWing} />
      <path d={tiltLamps} strokeWidth="2" />
    </g>
    <path d={cables} stroke="#0074e8" />
    <path d={wiring} />
    <path d={keyPlan} />
    <path d={keyCores} />
    <path d={keyNotes} strokeWidth="3" strokeDasharray="3 1" stroke="#006ad4" />
  </g>
);

const Drawing = styled.svg`
  width: 100%;
  height: 100%;
`;

const octagon = (x: number, y: number) =>
  poly(...Array.from({ length: 11 }, (_, i): Pt => [x + 10.5 * Math.cos((i * Math.PI) / 5 + 0.3), y + 10.5 * Math.sin((i * Math.PI) / 5 + 0.3)]));

const CadDrawing = () => (
  <Drawing viewBox="464 151 1124 750" preserveAspectRatio="xMinYMin slice" role="img" aria-label="照明平面图">
    <Plan />
    <g transform="translate(91.700 -12)"><Plan /></g>
    <g fill="none" stroke="#008000">
      <path d={[[705, 731.5], [705, 748], [740.5, 783.5], [756.5, 783.5]].map(([x, y]) => octagon(x, y)).join('')} />
      <path d="M716 732.500h24M716 748.500h24M740.500 749v25M756.500 749v25" />
    </g>
    <path d="M740 732.500h16.500v16" fill="none" stroke="#b02828" />
    <path d="M735 743l11 11M746 743l-11 11" stroke="#e00000" />
    <path d="M740 748.500L832 736" stroke="#fff" strokeWidth="3" />
    <g fill="#fff" fontFamily="Liberation Sans, sans-serif" fontSize="16" textAnchor="middle">
      <text x="705" y="738">B</text>
      <text x="705" y="754">A</text>
      <text x="748" y="774">3000</text>
      <text x="741" y="790">1</text>
      <text x="756" y="790">2</text>
      <text transform="translate(727 740.500) rotate(-90)">3000</text>
    </g>
    <text x="515" y="891" fill="#00f000" fontFamily="Liberation Sans, sans-serif" fontSize="13" textAnchor="middle">Y</text>
    <path d="M515 889l-5 16h10z" fill="#00f000" />
  </Drawing>
);

/* --------------------------------------------------------- view tool art */

const Cube = ({ glass = false, label = '' }: { glass?: boolean; label?: string }) => (
  <svg width="24" height="24" viewBox="0 0 24 24" stroke="#161b22" fill={glass ? '#64707c' : '#434c58'} aria-hidden="true">
    <path d="M1 5.500L6 1h17v17l-4.500 5H1z" />
    <path d="M1 5.500h17.500V23M18.500 5.500L23 1" fill="none" />
    {glass && <path d="M6 1v17H23M6 18l-5 5" fill="none" />}
    {label && <text x="6" y="20" fontSize="9" fontFamily="Liberation Sans, sans-serif" fill="#161b22" stroke="none">{label}</text>}
  </svg>
);

const Planet = () => (
  <svg width="24" height="24" viewBox="0 0 24 24" stroke="#1a1f26" aria-hidden="true">
    <circle cx="12" cy="12" r="9.500" fill="#4e5965" />
    <ellipse cx="10" cy="9" rx="5" ry="4" fill="#7c8893" stroke="none" />
    <path d="M3 13c-5 8 4 6 10 2s11-9 9-12" fill="none" strokeWidth="1.500" />
    <circle cx="19" cy="6" r="3.500" fill="#6b7783" />
  </svg>
);

const Rotate = () => (
  <svg width="24" height="24" viewBox="0 0 24 24" fill="none" stroke="#20262e" strokeWidth="2.500" aria-hidden="true">
    <path d="M20 17a9.500 9.500 0 1 1-1-11" /><path d="M22 2v7h-7z" fill="#20262e" stroke="none" />
  </svg>
);

const Checklist = () => (
  <svg width="24" height="24" viewBox="0 0 24 24" fill="#434c58" stroke="#161b22" aria-hidden="true">
    <path d="M1 4l2-3h18l2 3v19H1zM1 4h22" />
    <path d="M3 7l2 2 3-3M14 7l2 2 3-3M12 9v13M4 12h2v2H4zM8 13h2M4 18h2v2H4zM8 19h2M14 12h2v2h-2zM18 13h3M14 18h2v2h-2zM18 19h3" fill="none" />
  </svg>
);

/* ------------------------------------------------------------------- data */

const tabs = ['开始', '工程设置', '绘制', '工程量', '工具', '视图', '变更模块', '对量模块'];

const treeItems: { label: string; icon: IconName; child?: boolean }[] = [
  { label: '轴线', icon: 'folder' },
  { label: '给排水', icon: 'folderOpen' },
  { label: '卫生器具(水)(W)', icon: 'toilet', child: true },
  { label: '设备(水)(S)', icon: 'device', child: true },
  { label: '管道(水)(G)', icon: 'pipe', child: true },
  { label: '阀门法兰(水)(F)', icon: 'valve', child: true },
  { label: '管道附件(水)(A)', icon: 'fitting', child: true },
  { label: '通头管件(水)(J)', icon: 'elbow', child: true },
  { label: '零星构件(水)(K)', icon: 'misc', child: true },
  { label: '采暖燃气', icon: 'folder' },
  { label: '电气', icon: 'folder' },
  { label: '消防', icon: 'folder' },
  { label: '通风空调', icon: 'folder' },
  { label: '智控弱电', icon: 'folder' },
  { label: '建筑结构', icon: 'folder' },
  { label: '自定义', icon: 'folder' },
];

const sheets = [
  { name: '照明平面图_t...', level: 0, ratio: '', floor: '', code: '' },
  { name: '模型', level: 1, ratio: '1:1', floor: '首层', code: '' },
  { name: '首层照明...', level: 2, ratio: '1:1', floor: '首层', code: '1.1' },
  { name: '地下室照...', level: 2, ratio: '1:1', floor: '无', code: '' },
  { name: '二、三层...', level: 2, ratio: '1:1', floor: '无', code: '' },
  { name: '照明系统图', level: 2, ratio: '1:1', floor: '无', code: '' },
];

const Branch = ({ level, current, last }: { level: number; current: boolean; last: boolean }) => {
  const line = current ? '#fff' : '#dcdcdc';
  if (level === 2) {
    return (
      <svg width="41" height="20" viewBox="0 0 41 20" fill="none" stroke={line} aria-hidden="true">
        <path d={`M18.500 0v${last ? 10 : 20}M19 9.500h16`} />
      </svg>
    );
  }
  const x = level * 10 + 2.5;
  return (
    <svg width={level * 10 + 21} height="20" viewBox={`0 0 ${level * 10 + 21} 20`} fill="none" aria-hidden="true">
      {level === 1 && <path d="M8.500 0v9.500h4" stroke="#dcdcdc" />}
      <rect x={x} y="3.500" width="12" height="12" rx="2" fill="#fff" stroke="#7d7d7d" />
      <path d={`M${x + 3} 9.500h6`} stroke="#333" />
    </svg>
  );
};

const Tool = ({ icon, label, menu, muted, selected }: { icon: IconName; label: string; menu?: boolean; muted?: boolean; selected?: boolean }) => (
  <SmallButton type="button" $muted={muted} $selected={selected}>
    <Icon name={icon} />
    {label}
    {menu && <Caret color={muted ? '#aaa' : '#444'} />}
  </SmallButton>
);

const PTool = ({ icon, label, menu, muted, width }: { icon: IconName; label: string; menu?: boolean; muted?: boolean; width?: number }) => (
  <PanelButton type="button" $muted={muted} $width={width}>
    <Icon name={icon} />
    {label}
    {menu && <Caret />}
  </PanelButton>
);

const Choice = ({ label, value, width }: { label: string; value: string; width: number }) => (
  <SelectBox $width={width}>
    <Select aria-label={label} defaultValue={value}><option>{value}</option></Select>
    <Caret />
  </SelectBox>
);

const Offset = ({ axis }: { axis: string }) => (
  <OffsetLabel>
    {axis}=
    <Spin>
      <SpinInput type="text" defaultValue="0" />
      <svg width="6" height="14" viewBox="0 0 6 14" fill="#444" aria-hidden="true"><path d="M0 4h6L3 1zM0 10h6l-3 3z" /></svg>
    </Spin>
    mm
  </OffsetLabel>
);

export default function App() {
  return (
    <>
      <GlobalStyle />
      <Shell>
        <TabBar>
          <AppMenu type="button" aria-label="菜单">
            <AppBadge />
            <svg width="5" height="5" viewBox="0 0 5 5" aria-hidden="true"><path d="M5 0v5H0z" fill="#666" /></svg>
          </AppMenu>
          {tabs.map(t => <Tab key={t} type="button" $active={t === '工程设置'}>{t}</Tab>)}
          <TabTools>
            <svg width="16" height="16" viewBox="0 0 16 16" aria-hidden="true"><circle cx="8" cy="8" r="8" fill="#d2d2d2" /><path d="M5 4h6v5l2 4-5 3-5-3 2-4z" fill="#fff" /></svg>
            <svg width="16" height="16" viewBox="0 0 16 16" fill="#9a9a9a" aria-hidden="true"><path d="M8 0c4 0 5 3 5 7l2 5H1l2-5c0-4 1-7 5-7zM6 14h4l-1 2H7z" /></svg>
            <svg width="16" height="16" viewBox="0 0 16 16" fill="#9a9a9a" aria-hidden="true"><path d="M1 8a7 7 0 0 1 14 0c0 4-4 5-7 8-2-3-7-4-7-8z" /></svg>
            <svg width="16" height="16" viewBox="0 0 16 16" fill="#9a9a9a" aria-hidden="true"><path d="M4 0c5-1 6 5 1 8v3H3V6c4-1 3-4 1-4zM3 13h2v2H3zM12 11h2v1h-2z" /></svg>
            <svg width="16" height="16" viewBox="0 0 16 16" fill="#9a9a9a" aria-hidden="true"><path d="M4 4h8v12H4z" /></svg>
            <svg width="16" height="16" viewBox="0 0 16 16" fill="none" stroke="#9a9a9a" aria-hidden="true"><path d="M1.500 2v12.500h13V2M8 4v8M4 8.500h8" /></svg>
          </TabTools>
        </TabBar>

        <RibbonBar>
          <RibbonGroup $width={141}>
            <GroupBody>
              <BigButton type="button"><SelectBig />选择</BigButton>
              <ToolGrid>
                <Tool icon="batch" label="批量选择" muted />
                <Tool icon="find" label="查找图元" muted />
                <Tool icon="pick" label="拾取构件" muted />
              </ToolGrid>
            </GroupBody>
            <GroupTitle type="button">选择<Caret wide /></GroupTitle>
          </RibbonGroup>
          <RibbonGroup $width={157}>
            <GroupBody>
              <BigButton type="button"><SheetBig />图纸管理</BigButton>
              <ToolGrid>
                <Tool icon="bim" label="导入BIM" menu />
                <Tool icon="pdf" label="导入PDF" />
                <Tool icon="image" label="图片管理" menu />
              </ToolGrid>
            </GroupBody>
            <GroupTitle type="button">模型管理<Caret wide /></GroupTitle>
          </RibbonGroup>
          <RibbonGroup $width={242}>
            <GroupBody>
              <BigPair>
                <BigButton type="button"><InfoBig />工程信息</BigButton>
                <BigButton type="button"><FloorBig />楼层设置</BigButton>
              </BigPair>
              <ToolGrid>
                <Tool icon="calc" label="计算设置" />
                <Tool icon="design" label="设计说明信息" />
                <Tool icon="other" label="其它设置" />
              </ToolGrid>
            </GroupBody>
            <GroupTitle type="button">工程设置</GroupTitle>
          </RibbonGroup>
          <RibbonGroup $width={148} $pad={6}>
            <GroupBody>
              <ToolGrid $cols="68px auto">
                <Tool icon="erase" label="C删除" />
                <Tool icon="copyC" label="C复制" />
                <MarkedArea>
                  <Tool icon="move" label="C移动" selected />
                  <Highlight />
                </MarkedArea>
                <Tool icon="stretch" label="C拉伸" />
                <Tool icon="mirror" label="C镜像" />
              </ToolGrid>
            </GroupBody>
            <GroupTitle type="button" $pad={6}>通用编辑<Caret wide /></GroupTitle>
          </RibbonGroup>
          <RibbonGroup $width={291} $pad={6}>
            <GroupBody>
              <ToolGrid $cols="85px 85px auto">
                <Tool icon="scale" label="设置比例" />
                <Tool icon="explode" label="分解CAD" />
                <Tool icon="binocular" label="查找替换" />
                <Tool icon="draw" label="补画CAD" />
                <Tool icon="line" label="直线" menu muted />
                <Tool icon="views" label="多视图" />
                <Tool icon="annotate" label="修改CAD标注" />
                <Tool icon="breakLine" label="CAD线打断" menu />
              </ToolGrid>
            </GroupBody>
            <GroupTitle type="button" $pad={6}>CAD编辑</GroupTitle>
          </RibbonGroup>
        </RibbonBar>

        <OptionBar>
          <Choice label="楼层" value="首层" width={100} />
          <Choice label="专业" value="给排水" width={100} />
          <Choice label="构件类型" value="卫生器具(水)" width={100} />
          <Choice label="构件" value="" width={100} />
          <Choice label="分层" value="分层1" width={100} />
          <Choice label="偏移" value="不偏移" width={56} />
          <Offset axis="X" />
          <Offset axis="Y" />
        </OptionBar>

        <Workspace>
          <Column $width={203} $after={4}>
            <Panel as="nav">
              <PanelStrip><Cross /></PanelStrip>
              <PanelTitle>导航栏</PanelTitle>
              <ToolRow $height={29} $line $pad={1} $gap={5}>
                <Icon name="dots" />
                <Icon name="plusPair" />
                <Icon name="listEdit" />
              </ToolRow>
              <Tree>
                {treeItems.map(t => (
                  <TreeItem key={t.label} $child={t.child}>
                    <TreeButton type="button" $child={t.child} $selected={t.icon === 'toilet'}>
                      <Icon name={t.icon} />
                      {t.label}
                    </TreeButton>
                  </TreeItem>
                ))}
              </Tree>
            </Panel>
          </Column>

          <Column $width={262} $gap={4}>
            <Panel $height="374px">
              <PanelStrip><Cross /></PanelStrip>
              <PanelTitle>构件列表</PanelTitle>
              <ToolRow $height={29} $pad={3}>
                <PTool icon="newDoc" label="新建" menu width={69} />
                <PTool icon="delDoc" label="删除" muted width={58} />
                <PTool icon="copyDoc" label="复制" muted width={58} />
                <PanelButton type="button">构件库&gt;&gt;</PanelButton>
              </ToolRow>
              <ToolRow $height={30} $line $pad={3}>
                <PTool icon="sort" label="排序" menu width={69} />
                <PTool icon="filter" label="过滤" menu width={68} />
                <PTool icon="up" label="上移" muted width={58} />
                <PTool icon="down" label="下移" muted />
              </ToolRow>
              <SearchRow $height={19}>
                <SearchInput type="text" placeholder="搜索构件..." aria-label="搜索构件" />
                <Icon name="search" />
              </SearchRow>
              <div><ListItem type="button">卫生器具(水)</ListItem></div>
            </Panel>
            <Panel>
              <PanelStrip><Cross /></PanelStrip>
              <PanelTitle>属性</PanelTitle>
              <TableArea $gutter>
                <Table $row={21}>
                  <colgroup><col width={22} /><col width={81} /><col width={155} /></colgroup>
                  <thead><tr><th /><th>属性名称</th><th>属性值</th></tr></thead>
                  <tbody><tr><th>1</th><td /><td /></tr></tbody>
                </Table>
              </TableArea>
            </Panel>
          </Column>

          <Splitter $width={5}>
            <SplitHandle type="button" aria-label="收起左侧">
              <svg width="3" height="6" viewBox="0 0 3 6" aria-hidden="true"><path d="M3 0v6L0 3z" fill="#b4b8bd" /></svg>
            </SplitHandle>
          </Splitter>

          <Viewport>
            <CadDrawing />
            <ViewTools>
              <ViewTool type="button" aria-label="动态观察"><Planet /></ViewTool>
              <ViewTool type="button" aria-label="三维"><Cube label="3D" /></ViewTool>
              <ViewTool type="button" aria-label="线框" $menu><Cube glass /><Caret color="#20262e" wide /></ViewTool>
              <ViewTool type="button" aria-label="俯视" $menu><Cube /><Caret color="#20262e" wide /></ViewTool>
              <ViewTool type="button" aria-label="旋转" $menu><Rotate /><Caret color="#20262e" wide /></ViewTool>
              <ViewTool type="button" aria-label="显示设置"><Checklist /></ViewTool>
            </ViewTools>
          </Viewport>

          <Splitter $width={4}>
            <SplitHandle type="button" aria-label="收起右侧">
              <svg width="3" height="6" viewBox="0 0 3 6" aria-hidden="true"><path d="M0 0v6l3-3z" fill="#b4b8bd" /></svg>
            </SplitHandle>
          </Splitter>

          <Column $width={311} $gap={5}>
            <Panel $height="411px">
              <PanelStrip />
              <PanelTitle>图纸管理</PanelTitle>
              <ToolRow $height={29} $line $pad={5}>
                <PTool icon="add" label="添加" width={57} />
                <PTool icon="locate" label="定位" menu muted width={68} />
                <PTool icon="split" label="手动分割" menu muted width={93} />
                <PTool icon="copySheet" label="复制" />
              </ToolRow>
              <SearchRow $height={25}>
                <SearchInput type="text" placeholder="搜索图纸..." aria-label="搜索图纸" />
                <Icon name="search" />
              </SearchRow>
              <TableArea $gutter>
                <Table $row={21}>
                  <colgroup>
                    <col width={22} /><col width={112} /><col width={51} /><col width={71} /><col width={52} />
                  </colgroup>
                  <thead><tr><th /><HeadActive>图纸名称</HeadActive><th>比例</th><th>楼层</th><th>楼层编号</th></tr></thead>
                  <tbody>
                    {sheets.map((s, i) => (
                      <SheetRow key={s.name} $current={i === 2}>
                        <th>{i + 1}</th>
                        <td><NameCell><Branch level={s.level} current={i === 2} last={i === 5} />{s.name}</NameCell></td>
                        <td>{s.ratio}</td>
                        <td>{s.floor}</td>
                        <td>{s.code}</td>
                      </SheetRow>
                    ))}
                  </tbody>
                </Table>
              </TableArea>
            </Panel>
            <Panel>
              <PanelStrip />
              <PanelTitle>CAD图层</PanelTitle>
              <ToolRow $height={35} $gap={14} $pad={3} $below={6}>
                <PanelButton type="button">显示指定图层</PanelButton>
                <PanelButton type="button">隐藏指定图层</PanelButton>
                <PanelButton type="button">显示指定图元</PanelButton>
              </ToolRow>
              <TableArea>
                <Table $row={26}>
                  <colgroup><col width={36} /><col width={36} /><col width={151} /></colgroup>
                  <thead><tr><th>开/关</th><th>颜色</th><th>名称</th></tr></thead>
                  <tbody>
                    {['已提取的CAD图层', 'CAD原始图层'].map((name, i) => (
                      <tr key={name}>
                        <td><CheckBox type="checkbox" defaultChecked={i === 1} aria-label={name} /></td>
                        <td><ColorMark width="8" height="10" viewBox="0 0 8 10" fill="none" stroke="#aaa" aria-hidden="true"><path d="M1.500 1v8l5-3V4z" /></ColorMark></td>
                        <LayerName>{name}</LayerName>
                      </tr>
                    ))}
                  </tbody>
                </Table>
              </TableArea>
            </Panel>
          </Column>
        </Workspace>
      </Shell>
    </>
  );
}
